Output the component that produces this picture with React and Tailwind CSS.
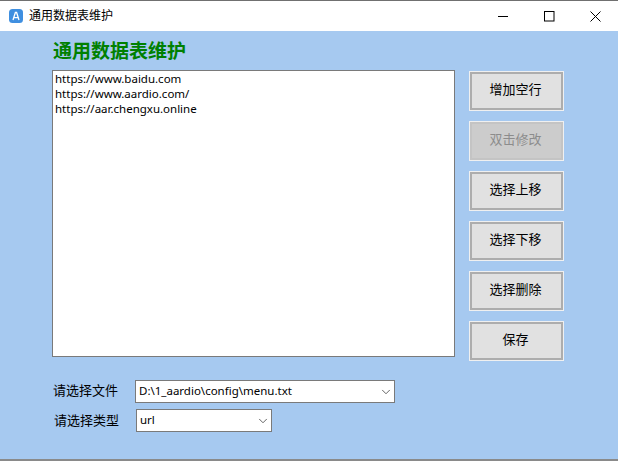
import { ChevronDown } from "lucide-react";

const FONT = "font-['Noto_Sans','Noto_Sans_CJK_SC',sans-serif]";

const URLS = ["https://www.baidu.com", "https://www.aardio.com/", "https://aar.chengxu.online"];

/* ── Side button ── */
function SideBtn({ label, disabled }) {
  return (
    <button
      disabled={disabled}
      className={`w-[95px] h-[40px] border border-[#f0f0f0] shrink-0 ${disabled ? "text-[#8c8c8c]" : "text-black"}`}
    >
      <span
        className={`flex items-center justify-center w-full h-full border-2 pb-[3px] pr-[2px] text-[13px] ${
          disabled ? "bg-[#cccccc] border-[#c4c4c4]" : "bg-[#e1e1e1] border-[#adadad]"
        }`}
      >
        {label}
      </span>
    </button>
  );
}

/* ── Combo box ── */
function Combo({ value, width }) {
  return (
    <div className={`flex items-center justify-between h-[23px] bg-white border border-[#7a7a7a] pl-[3px] pr-px pb-px text-[11.5px] text-black ${width}`}>
      <span>{value}</span>
      <ChevronDown size={14} strokeWidth={1.3} className="text-[#333] mt-px" />
    </div>
  );
}

export default function App() {
  return (
    <div className={`w-[618px] h-[461px] flex flex-col overflow-hidden bg-[#a6c9f0] ${FONT}`}>
      {/* ── Title bar ── */}
      <div className="h-[31px] shrink-0 flex items-center bg-white border-t border-[#707070] text-[12px] text-black">
        <svg width="14" height="14" viewBox="0 0 14 14" className="ml-[9px] mr-[6px]">
          <rect width="14" height="14" rx="3.5" fill="#3f8fe0" />
          <path d="M4 11 L6.4 3.5 H7.6 L10 11 M5 8.6 H9" fill="none" stroke="#fff" strokeWidth="1.3" />
        </svg>
        <span>通用数据表维护</span>
        <div className="ml-auto flex items-center gap-[35px] pr-[17px]">
          <svg width="11" height="11" viewBox="0 0 11 11">
            <path d="M0 5.5 H10" stroke="#000" strokeWidth="1" />
          </svg>
          <svg width="11" height="11" viewBox="0 0 11 11">
            <rect x="0.5" y="0.5" width="9.5" height="9.5" fill="none" stroke="#000" strokeWidth="1" />
          </svg>
          <svg width="11" height="11" viewBox="0 0 11 11">
            <path d="M0.5 0.5 L10.5 10.5 M10.5 0.5 L0.5 10.5" stroke="#000" strokeWidth="1" />
          </svg>
        </div>
      </div>

      {/* ── Body ── */}
      <div className="flex-1 flex flex-col pl-[52px] pt-[6px]">
        <h1 className="h-[33px] pl-px leading-[28px] text-[19px] font-bold text-[#008000]">通用数据表维护</h1>

        <div className="flex">
          <div className="w-[403px] h-[287px] bg-white border border-[#7a7a7a] px-[2px] text-[11.5px] leading-[15px] text-black">
            {URLS.map((u) => (
              <div key={u}>{u}</div>
            ))}
          </div>
          <div className="flex flex-col gap-[10px] ml-[14px] mt-px">
            <SideBtn label="增加空行" />
            <SideBtn label="双击修改" disabled />
            <SideBtn label="选择上移" />
            <SideBtn label="选择下移" />
            <SideBtn label="选择删除" />
            <SideBtn label="保存" />
          </div>
        </div>

        <div className="flex items-center mt-[-1px] pt-[20px] text-[13px] text-black">
          <span className="w-[83px] pl-px pb-px">请选择文件</span>
          <Combo value="D:\1_aardio\config\menu.txt" width="w-[260px]" />
        </div>
        <div className="flex items-center mt-[6px] text-[13px] text-black">
          <span className="w-[84px] pl-[2px]">请选择类型</span>
          <Combo value="url" width="w-[136px]" />
        </div>
      </div>

      <div className="h-[2px] shrink-0 bg-[#8a8a8a]" />
    </div>
  );
}
